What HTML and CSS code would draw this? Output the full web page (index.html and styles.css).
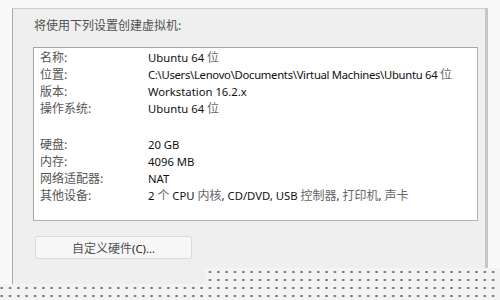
FILE: index.html
```html
<!DOCTYPE html>
<html>
<head>
<meta charset="utf-8">
<link rel="stylesheet" href="styles.css">
</head>
<body>
<div class="window">
  <div class="title">将使用下列设置创建虚拟机:</div>
  <div class="summary">
    <div class="row"><span class="label">名称:</span><span class="value">Ubuntu 64 <span class="cjk">位</span></span></div>
    <div class="row"><span class="label">位置:</span><span class="value path">C:\Users\Lenovo\Documents\Virtual Machines\Ubuntu 64 <span class="cjk">位</span></span></div>
    <div class="row"><span class="label">版本:</span><span class="value">Workstation 16.2.x</span></div>
    <div class="row"><span class="label">操作系统:</span><span class="value">Ubuntu 64 <span class="cjk">位</span></span></div>
    <div class="row spaced"><span class="label">硬盘:</span><span class="value">20 GB</span></div>
    <div class="row"><span class="label">内存:</span><span class="value">4096 MB</span></div>
    <div class="row"><span class="label">网络适配器:</span><span class="value">NAT</span></div>
    <div class="row"><span class="label">其他设备:</span><span class="value">2 <span class="cjk">个</span> CPU <span class="cjk">内核</span>, CD/DVD, USB <span class="cjk">控制器</span>, <span class="cjk">打印机</span>, <span class="cjk">声卡</span></span></div>
  </div>
  <button class="hw-btn"><span class="cjk">自定义硬件</span>(C)...</button>
</div>
<div class="dots dots-right"></div>
<div class="dots dots-bottom"></div>
</body>
</html>
```
FILE: styles.css
```css
html, body {
  margin: 0;
  padding: 0;
}
body {
  width: 500px;
  height: 300px;
  background: #f9f9f9;
  position: relative;
  overflow: hidden;
  font-family: "Noto Sans", "Noto Sans CJK SC", sans-serif;
  font-size: 12px;
  color: #1a1a1a;
}
.window {
  margin: 8px 0 0 12px;
  width: 472px;
  height: 277px;
  box-sizing: content-box;
  background: #efefef;
  border-top: 1px solid #cdcdcd;
  border-left: 1px solid #a9a9a9;
  border-right: 3px solid #c6c6c6;
  padding: 0;
}
.title {
  margin: 8px 0 0 21px;
  line-height: 16px;
  height: 16px;
  font-family: "Noto Sans CJK SC", sans-serif;
  font-size: 12px;
  color: #505050;
}
.summary {
  margin: 14px 7px 0 20px;
  background: #fff;
  border: 1px solid #a6a6a6;
  border-right-color: #b5b5b5;
  border-bottom-color: #b0b0b0;
  padding: 0 0 17px 6px;
}
.row {
  display: flex;
  align-items: baseline;
  line-height: 17px;
  height: 17px;
  white-space: nowrap;
}
.row.spaced {
  margin-top: 19px;
}
.label {
  width: 108px;
  flex: none;
  font-family: "Noto Sans CJK SC", sans-serif;
  font-size: 12px;
  color: #555;
}
.value {
  font-size: 11.3px;
  color: #111;
}
.value.path {
  letter-spacing: -0.3px;
}
.cjk {
  font-family: "Noto Sans CJK SC", sans-serif;
  font-size: 12px;
  letter-spacing: 0;
  color: #666;
}
.hw-btn {
  display: block;
  margin: 15px 0 0 22px;
  width: 157px;
  height: 23px;
  border: 1px solid #dadada;
  border-radius: 2px;
  background: #f7f7f7;
  font-family: "Noto Sans", "Noto Sans CJK SC", sans-serif;
  font-size: 11.3px;
  color: #222;
  padding: 0;
}
.hw-btn .cjk {
  color: #555;
}
.dots {
  position: absolute;
  background-color: #f3f3f3;
  background-image: radial-gradient(circle, #6d6d6d 0.9px, rgba(0,0,0,0) 1.4px);
  background-size: 8.33px 8px;
}
.dots-right {
  left: 205px;
  top: 268px;
  width: 295px;
  height: 32px;
  background-position: 0.85px 0;
}
.dots-bottom {
  left: 0;
  top: 284px;
  width: 500px;
  height: 16px;
  background-position: -2.45px 0;
}
```
